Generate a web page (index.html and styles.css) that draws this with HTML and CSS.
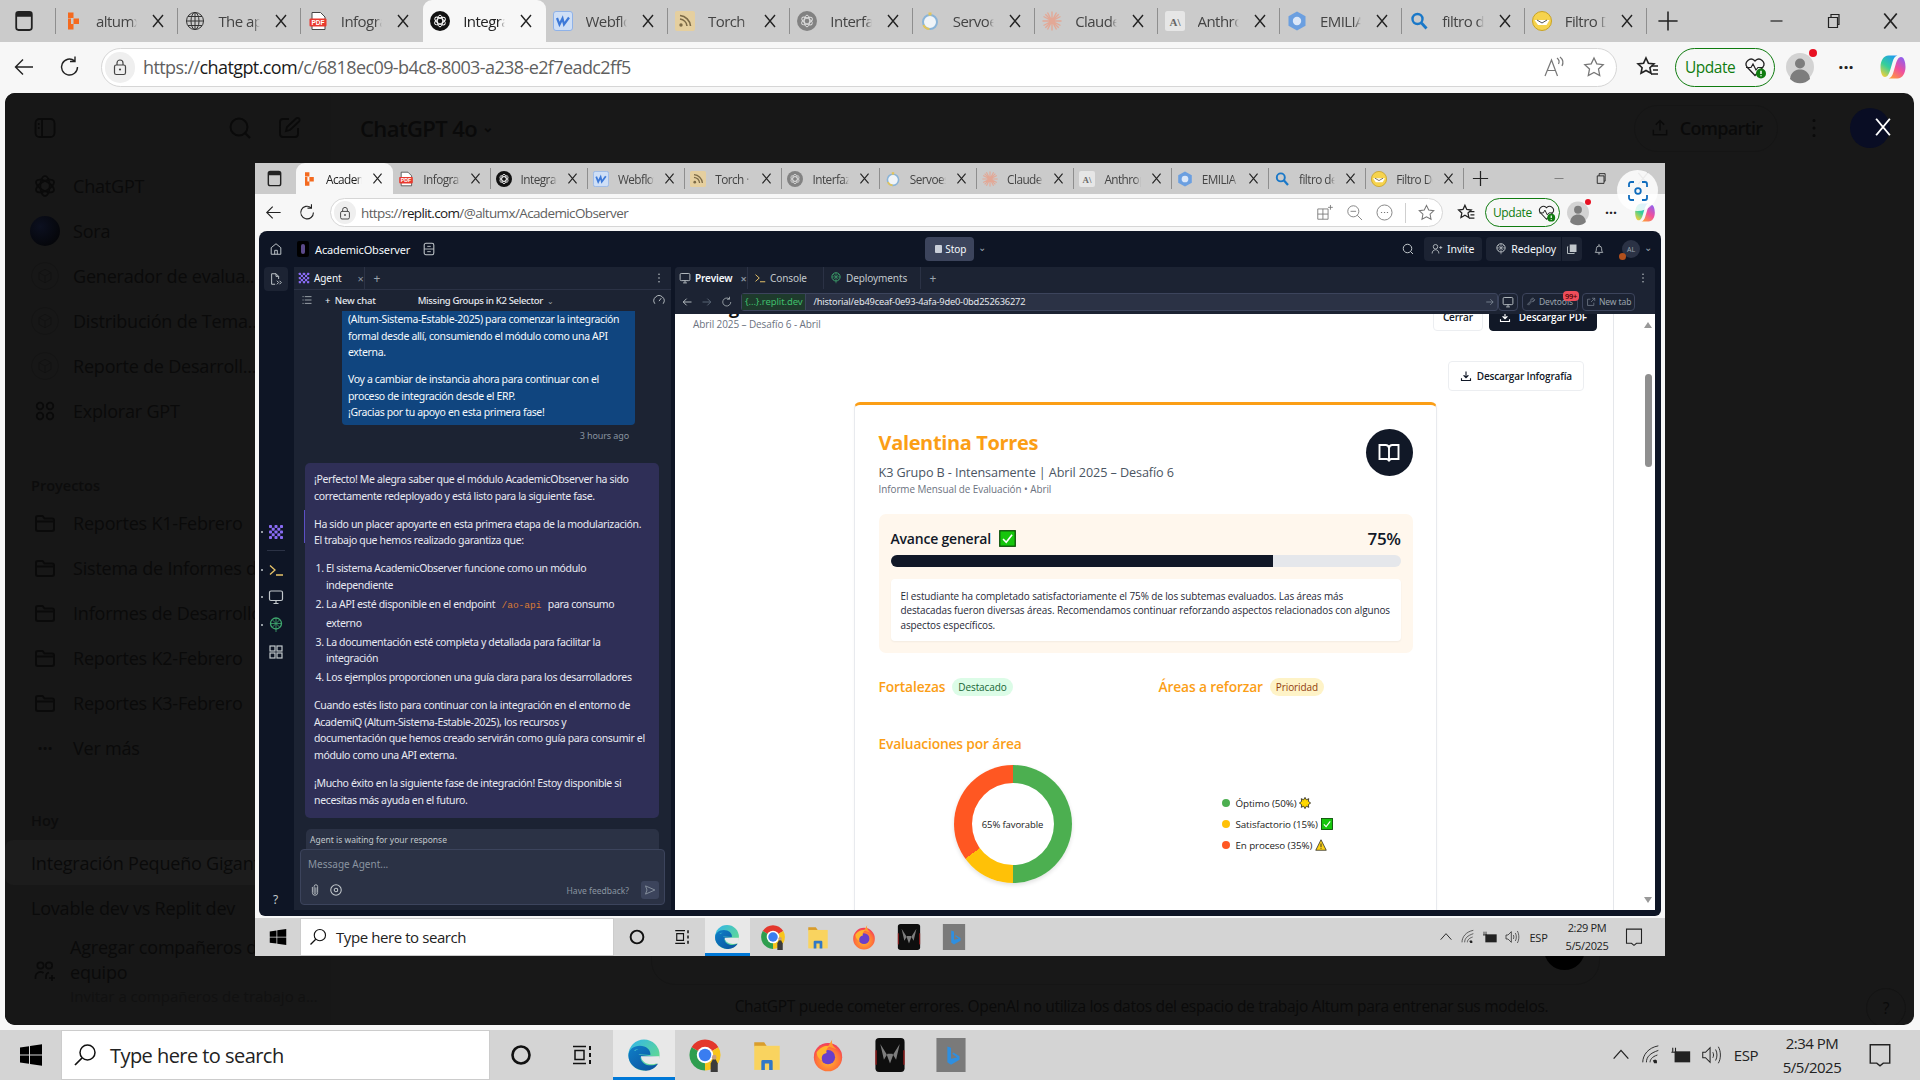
FILE: index.html
```html
<!DOCTYPE html>
<html lang="es">
<head>
<meta charset="utf-8">
<title>ChatGPT</title>
<link rel="stylesheet" href="styles.css">
</head>
<body>
<svg class="defs" aria-hidden="true">
  <defs>
    <linearGradient id="g-edge" x1="0" y1="0" x2="1" y2="1"><stop offset="0" stop-color="#2fb4ec"/><stop offset="1" stop-color="#6fe37a"/></linearGradient>
    <linearGradient id="g-edge2" x1="0" y1="0" x2="1" y2="1"><stop offset="0" stop-color="#0f7fc8"/><stop offset="1" stop-color="#0a4f9a"/></linearGradient>
    <radialGradient id="g-fox" cx=".5" cy=".6" r=".6"><stop offset="0" stop-color="#ffc02e"/><stop offset=".7" stop-color="#ff7139"/><stop offset="1" stop-color="#f0375e"/></radialGradient>
    <linearGradient id="g-cl" x1=".8" y1="0" x2=".2" y2="1"><stop offset="0" stop-color="#1f9bf0"/><stop offset=".55" stop-color="#35cf9a"/><stop offset="1" stop-color="#f2d03b"/></linearGradient>
    <linearGradient id="g-cr" x1=".8" y1="0" x2=".2" y2="1"><stop offset="0" stop-color="#8f5ff0"/><stop offset=".5" stop-color="#f0509c"/><stop offset="1" stop-color="#ff9a3c"/></linearGradient>
    <symbol id="i-x" viewBox="0 0 16 16"><path d="M3 2l10 12M13 2L3 14" fill="none" stroke="currentColor" stroke-width="1.4"/></symbol>
    <symbol id="i-side" viewBox="0 0 20 20"><rect x="3.500" y="2.500" width="13" height="15" rx="2" fill="none" stroke="currentColor" stroke-width="1.500"/><path d="M3.500 4.500a2 2 0 012-2h9a2 2 0 012 2v2h-13z" fill="currentColor"/></symbol>
    <symbol id="i-plus" viewBox="0 0 20 20"><path d="M10 2v16M2 10h16" stroke="currentColor" stroke-width="1.300" fill="none"/></symbol>
    <symbol id="i-min" viewBox="0 0 20 20"><path d="M4 10h12" stroke="currentColor" stroke-width="1.200"/></symbol>
    <symbol id="i-max" viewBox="0 0 20 20"><path d="M5 6.500h9v10H5zM7.500 6.500V3.500h8v10h-1.500" fill="none" stroke="currentColor" stroke-width="1.200"/></symbol>
    <symbol id="i-back" viewBox="0 0 24 24"><path d="M21 12H4M11 4.500L3.500 12l7.500 7.500" fill="none" stroke="currentColor" stroke-width="1.400"/></symbol>
    <symbol id="i-reload" viewBox="0 0 24 24"><path d="M19.500 12a8 8 0 11-3-6.200M17 1.500V6.500h-5" fill="none" stroke="currentColor" stroke-width="1.400"/></symbol>
    <symbol id="i-lock" viewBox="0 0 20 20"><rect x="4.500" y="8" width="11" height="9.500" rx="1.800" fill="none" stroke="currentColor" stroke-width="1.200"/><path d="M7 8V6a3 3 0 016 0v2" fill="none" stroke="currentColor" stroke-width="1.200"/><circle cx="10" cy="12.500" r="1.100" fill="currentColor"/></symbol>
    <symbol id="i-star" viewBox="0 0 24 24"><path d="M12 3l2.800 5.900 6.400.8-4.700 4.400 1.200 6.400L12 17.400l-5.700 3.100 1.200-6.400L2.800 9.700l6.400-.8z" fill="none" stroke="currentColor" stroke-width="1.300"/></symbol>
    <symbol id="i-favs" viewBox="0 0 24 24"><path d="M10 3l2.400 5.200 5.600.7-4.100 3.800 1.100 5.600-5-2.800-5 2.800 1.100-5.600L2 8.900l5.600-.7z" fill="none" stroke="currentColor" stroke-width="1.600"/><path d="M16 11h6M17 15h5M15 19h7" stroke="currentColor" stroke-width="1.500"/></symbol>
    <symbol id="i-aloud" viewBox="0 0 24 24"><path d="M3 21L9.500 5l6 16M5.500 15.500h8" fill="none" stroke="currentColor" stroke-width="1.200"/><path d="M15 3c2 1.500 2.500 4 1.500 6M18 2c3 2.500 3.500 6 2 9" fill="none" stroke="currentColor" stroke-width="1.200"/></symbol>
    <symbol id="i-heart" viewBox="0 0 24 24"><path d="M12 20.500L4 12a5 5 0 017.500-6.500l.5.500.5-.500A5 5 0 0120 12z" fill="none" stroke="#222" stroke-width="1.300"/><path d="M3 12.500h5l2-3.500 3 6 2-2.500h5" fill="none" stroke="#222" stroke-width="1.200"/><circle cx="18" cy="18.500" r="5" fill="#107c10"/><path d="M18 15.800v3.200M18 20.300v1" stroke="#fff" stroke-width="1.500"/></symbol>
    <symbol id="i-avatar" viewBox="0 0 28 28"><circle cx="14" cy="14" r="14" fill="#d3d3d3"/><circle cx="14" cy="10.500" r="5" fill="#7d7d7d"/><path d="M4 26c1-7 5-9.500 10-9.500s9 2.500 10 9.500a14 14 0 01-20 0z" fill="#7d7d7d"/></symbol>
    <symbol id="i-copilot" viewBox="0 0 28 28"><path d="M9.500 2.500h9c-2.500.5-3.800 3-4.800 6l-2.200 7.500C10.500 19.500 9 24 6 24c-3 0-4.500-5-4.500-10 0-6 3-11.500 8-11.500z" fill="url(#g-cl)"/><path d="M18.500 25.500h-9c2.500-.5 3.800-3 4.800-6l2.200-7.500C17.500 8.500 19 4 22 4c3 0 4.500 5 4.500 10 0 6-3 11.500-8 11.500z" fill="url(#g-cr)"/></symbol>
    <symbol id="i-gpt" viewBox="0 0 24 24"><g fill="none" stroke="currentColor" stroke-width="1.700"><ellipse cx="12" cy="12" rx="10" ry="4.700" transform="rotate(30 12 12)"/><ellipse cx="12" cy="12" rx="10" ry="4.700" transform="rotate(90 12 12)"/><ellipse cx="12" cy="12" rx="10" ry="4.700" transform="rotate(150 12 12)"/></g></symbol>
    <symbol id="a-tile" viewBox="0 0 24 24"><g fill="none" stroke="currentColor" stroke-width="1.100"><path d="M3.500 7.500h13v13h-13zM10 7.500v13M3.500 14h13"/><path d="M19.500 2.500v6M16.500 5.500h6"/></g></symbol>
    <symbol id="a-zoom" viewBox="0 0 24 24"><g fill="none" stroke="currentColor" stroke-width="1.100"><circle cx="10.500" cy="10.500" r="7"/><path d="M15.500 15.500l6 6M7 10.500h7"/></g></symbol>
    <symbol id="a-more" viewBox="0 0 24 24"><circle cx="12" cy="12" r="9.500" fill="none" stroke="currentColor" stroke-width="1.100"/><path d="M7.500 12h1.500M11.300 12h1.500M15 12h1.500" stroke="currentColor" stroke-width="1.500"/></symbol>
    <symbol id="f-altum" viewBox="0 0 20 20"><path d="M5 1.500h5.500V7H5zM10.500 7.500H16v5.500h-5.500zM5 13h5.500v5.500H5zM5 7.500h3V13H5z" fill="#f46a1f"/></symbol>
    <symbol id="f-globe" viewBox="0 0 20 20"><g fill="none" stroke="#333" stroke-width="1"><circle cx="10" cy="10" r="8.500"/><ellipse cx="10" cy="10" rx="4" ry="8.500"/><path d="M1.500 10h17M3 5.500h14M3 14.500h14M10 1.500v17"/></g></symbol>
    <symbol id="f-pdf" viewBox="0 0 20 20"><path d="M4 1.500h8.500L17 6v12.500H4z" fill="#fff" stroke="#444"/><rect x="1.500" y="7.500" width="17" height="8" rx="1" fill="#e8392e"/><text x="10" y="14" text-anchor="middle" font-size="6.500" font-weight="700" font-family="Liberation Sans, sans-serif" fill="#fff">PDF</text></symbol>
    <symbol id="f-gpt" viewBox="0 0 20 20"><circle cx="10" cy="10" r="10" fill="#111"/><use href="#i-gpt" x="3" y="3" width="14" height="14" color="#fff"/></symbol>
    <symbol id="f-gptg" viewBox="0 0 20 20"><circle cx="10" cy="10" r="10" fill="#828282"/><use href="#i-gpt" x="3" y="3" width="14" height="14" color="#ddd"/></symbol>
    <symbol id="f-web" viewBox="0 0 20 20"><rect x=".5" y=".5" width="19" height="19" rx="2.500" fill="#cfdff6" stroke="#8fb2e8"/><path d="M4 7l2.500 6.500L9.500 7.500 11 13.500 16 6.500" fill="none" stroke="#3d79d8" stroke-width="2.200"/></symbol>
    <symbol id="f-torch" viewBox="0 0 20 20"><rect width="20" height="20" rx="2" fill="#e5cf9f"/><g fill="none" stroke="#7c6a46" stroke-width="1.600"><path d="M5 8a8 8 0 017 7M5 4.500a11.500 11.500 0 0110.500 10.500"/></g><circle cx="6" cy="14" r="1.700" fill="#7c6a46"/></symbol>
    <symbol id="f-serv" viewBox="0 0 20 20"><circle cx="10" cy="11" r="7" fill="#f0f4f8" stroke="#8ab4d8" stroke-width="2"/><path d="M3.500 14a7 7 0 006 4" fill="none" stroke="#e3c55a" stroke-width="2"/><rect x="8.500" y="1.500" width="3" height="3" fill="#e3c55a"/></symbol>
    <symbol id="f-claude" viewBox="0 0 20 20"><g stroke="#e3a896" stroke-width="1.400" fill="none"><path d="M10 .5v19M.5 10h19M3.300 3.300l13.400 13.400M16.700 3.300L3.300 16.700M5.500 1.500l9 17M14.500 1.500l-9 17M1.500 5.500l17 9M18.500 5.500l-17 9"/></g></symbol>
    <symbol id="f-anth" viewBox="0 0 20 20"><rect width="20" height="20" rx="2.500" fill="#e6e6e6"/><text x="10" y="14.500" text-anchor="middle" font-size="11" font-weight="700" font-family="Liberation Serif, serif" fill="#666">A\</text></symbol>
    <symbol id="f-emi" viewBox="0 0 20 20"><path d="M10 .5l8.500 4.800v9.400L10 19.500l-8.500-4.800V5.300z" fill="#6b9fe0"/><circle cx="10" cy="10" r="4.200" fill="#dbe7f8"/></symbol>
    <symbol id="f-find" viewBox="0 0 20 20"><circle cx="8.500" cy="8" r="5" fill="none" stroke="#1a78c8" stroke-width="2.400"/><path d="M12.500 12l5 5.500" stroke="#1a78c8" stroke-width="2.800"/></symbol>
    <symbol id="f-hand" viewBox="0 0 20 20"><circle cx="10" cy="10" r="9.500" fill="#f6d34e" stroke="#c8a224"/><path d="M2.500 9h15l-3 5H6z" fill="#fff"/><path d="M5 9l5 3 5-3" fill="none" stroke="#555"/></symbol>
    <symbol id="t-win" viewBox="0 0 24 24"><path d="M1 4.500l9-1.300V11.500H1zM11 3.100L23 1.300V11.500H11zM1 12.500h9v8.300l-9-1.300zM11 12.500h12v10.200l-12-1.800z" fill="currentColor"/></symbol>
    <symbol id="t-lens" viewBox="0 0 24 24"><circle cx="14.500" cy="9.500" r="7.500" fill="none" stroke="currentColor" stroke-width="1.500"/><path d="M9 15l-7 7" stroke="currentColor" stroke-width="1.700"/></symbol>
    <symbol id="t-ring" viewBox="0 0 24 24"><circle cx="12" cy="12" r="8.500" fill="none" stroke="currentColor" stroke-width="2.600"/></symbol>
    <symbol id="t-view" viewBox="0 0 24 24"><path d="M3 3.500h13M3 20.500h13M5 7.500h9v9H5z" fill="none" stroke="currentColor" stroke-width="1.500"/><path d="M20 3v4M20 10v4M20 17v4" stroke="currentColor" stroke-width="2"/></symbol>
    <symbol id="t-edge" viewBox="0 0 24 24"><circle cx="12" cy="12" r="11" fill="url(#g-edge)"/><path d="M23 13.500H9.500c.5 5 6.500 7.500 12.500 4.500-2 3.500-6 5.500-10 5C6 22.500 1 18 1 12.500 1 8 5 5.500 9 5.500c4.500 0 8 3 7.500 6.500l-8-.5C6 14 6 17 8 19 3 16 3 9 8 8c-1 0-2 0-3 1 1-.5 2 3 5 3z" fill="url(#g-edge2)"/><path d="M23 12.800H9.800c.6 5 6.700 7.200 12.700 4.700.4-1.400.6-3 .5-4.700z" fill="var(--tile,#e6e6e6)"/></symbol>
    <symbol id="t-chrome" viewBox="0 0 24 24"><path d="M12 12L2.500 6.500A11 11 0 0121.500 6.500z" fill="#e3372c"/><path d="M12 12L21.500 6.500A11 11 0 0112 23z" fill="#f8c51c"/><path d="M12 12L12 23A11 11 0 012.500 6.500z" fill="#2f9e4f"/><circle cx="12" cy="12" r="5.800" fill="#fff"/><circle cx="12" cy="12" r="4.400" fill="#3a7df0"/><path d="M16 24v-6l1.500-3h2l1.500 3v6z" fill="#3b3b3b"/><circle cx="18.500" cy="13.500" r="1.600" fill="#caa07c"/></symbol>
    <symbol id="t-folder" viewBox="0 0 24 24"><path d="M3 3h7l2 3H3z" fill="#d99d2b"/><rect x="3" y="5.500" width="18" height="17" fill="#f9d35f"/><path d="M8 22.500v-6a1 1 0 011-1h6a1 1 0 011 1v6h-2.500v-4.500h-3v4.500z" fill="#3178c6"/></symbol>
    <symbol id="t-fox" viewBox="0 0 24 24"><circle cx="12" cy="13.500" r="10" fill="url(#g-fox)"/><path d="M15 1c-1 3 1 5 3 7L12 6z" fill="#ff9a2e"/><circle cx="12" cy="13.500" r="5" fill="#6a3fc9"/><path d="M4 10c3-4 7-5 9-4-2 1-2.500 3-2 4.500-3 .5-4 3-3 5.500-2-1-4-3-4-6z" fill="#ffb52e"/></symbol>
    <symbol id="t-pred" viewBox="0 0 24 28"><rect width="24" height="28" rx="3" fill="#0e0e0e"/><path d="M4 5l5 8 3 8 3-8 5-8-3 13-3-5h-4l-3 5z" fill="#7d7d7d"/><path d="M.5 10v12M23.500 10v12" stroke="#a81f1f"/></symbol>
    <symbol id="t-bing" viewBox="0 0 24 28"><rect width="24" height="28" fill="#7a7a7a"/><path d="M9 7l3 1v9l5-1-4-3 1-1 5 3v3l-7 4-3-2z" fill="#2f8fe0"/></symbol>
    <symbol id="t-up" viewBox="0 0 24 24"><path d="M4 16l8-9 8 9" fill="none" stroke="currentColor" stroke-width="1.400"/></symbol>
    <symbol id="t-wifi" viewBox="0 0 24 24"><g fill="none" stroke="currentColor" stroke-width="1"><path d="M3 20C3 12 9 4 20 2M7 20c0-6 4-10 13-13M11 20c0-3 2-6 8-8"/></g><path d="M14 18l1.500 3h3v-3l-2-1z" fill="currentColor"/></symbol>
    <symbol id="t-batt" viewBox="0 0 24 24"><rect x="5" y="8" width="17" height="12" fill="currentColor"/><path d="M3 4v5M6 4v5M1.500 9h6" stroke="currentColor" stroke-width="1.200"/></symbol>
    <symbol id="t-vol" viewBox="0 0 24 24"><path d="M3 9h3l5-5v16l-5-5H3z" fill="none" stroke="currentColor" stroke-width="1.100"/><path d="M14 9c1 2 1 4 0 6M17 6c2 3.500 2 8.500 0 12M20 3c3 5 3 13 0 18" fill="none" stroke="currentColor" stroke-width="1"/></symbol>
    <symbol id="t-note" viewBox="0 0 24 24"><path d="M3 2.500h18v17h-6l-3 2.500-3-2.500H3z" fill="none" stroke="currentColor" stroke-width="1.300"/></symbol>
    <symbol id="g-panel" viewBox="0 0 24 24"><rect x="2.500" y="3" width="19" height="18" rx="4" fill="none" stroke="currentColor" stroke-width="1.800"/><path d="M9 3v18" stroke="currentColor" stroke-width="1.800"/><circle cx="5.800" cy="8" r="1" fill="currentColor"/><circle cx="5.800" cy="12" r="1" fill="currentColor"/></symbol>
    <symbol id="g-search" viewBox="0 0 24 24"><circle cx="11" cy="11" r="8.500" fill="none" stroke="currentColor" stroke-width="2"/><path d="M17 17l5 5" stroke="currentColor" stroke-width="2"/></symbol>
    <symbol id="g-edit" viewBox="0 0 24 24"><path d="M12 3H6a3 3 0 00-3 3v12a3 3 0 003 3h12a3 3 0 003-3v-6M9 15l1-4L19 2.500a2 2 0 013 3L13 14z" fill="none" stroke="currentColor" stroke-width="1.800"/></symbol>
    <symbol id="g-cube" viewBox="0 0 24 24"><path d="M12 3l8 4.500v9L12 21l-8-4.500v-9zM4 7.500l8 4.500 8-4.500M12 12v9" fill="none" stroke="currentColor" stroke-width="1.300"/></symbol>
    <symbol id="g-apps" viewBox="0 0 24 24"><g fill="none" stroke="currentColor" stroke-width="1.800"><circle cx="7" cy="7" r="3.300"/><circle cx="17" cy="7" r="3.300"/><circle cx="7" cy="17" r="3.300"/><circle cx="17" cy="17" r="3.300"/></g></symbol>
    <symbol id="g-folder" viewBox="0 0 24 24"><path d="M3 8V7a2 2 0 012-2h4.500l2 2.500H19a2 2 0 012 2V18a2 2 0 01-2 2H5a2 2 0 01-2-2zM3 10.500h18" fill="none" stroke="currentColor" stroke-width="2"/></symbol>
    <symbol id="g-team" viewBox="0 0 24 24"><g fill="none" stroke="currentColor" stroke-width="1.700"><circle cx="7.500" cy="6.500" r="3.200"/><circle cx="16" cy="6.500" r="3.200"/><path d="M2.500 20v-3a5 5 0 018-3M13 20v-3a4 4 0 013-3.500"/><path d="M19 16v6M16 19h6"/></g></symbol>
    <symbol id="g-share" viewBox="0 0 24 24"><path d="M12 15V3M7 8l5-5 5 5M4 14v6h16v-6" fill="none" stroke="currentColor" stroke-width="1.800"/></symbol>
    <symbol id="r-home" viewBox="0 0 16 16"><path d="M2.500 14V6.500L8 2l5.500 4.500V14zM6.500 14V9.500h3V14" fill="none" stroke="currentColor" stroke-width="1.100"/></symbol>
    <symbol id="r-db" viewBox="0 0 16 16"><rect x="2.500" y="1.500" width="11" height="13" rx="2" fill="none" stroke="currentColor" stroke-width="1.200"/><path d="M2.500 8h11M6 5h4M6 11h4" stroke="currentColor" stroke-width="1"/></symbol>
    <symbol id="r-agent" viewBox="0 0 16 16"><g fill="currentColor"><rect x="1" y="1" width="3" height="3" rx=".8"/><rect x="6.500" y="1" width="3" height="3" rx=".8"/><rect x="12" y="1" width="3" height="3" rx=".8"/><rect x="3.700" y="3.700" width="3" height="3" rx=".8"/><rect x="9.300" y="3.700" width="3" height="3" rx=".8"/><rect x="1" y="6.500" width="3" height="3" rx=".8"/><rect x="6.500" y="6.500" width="3" height="3" rx=".8"/><rect x="12" y="6.500" width="3" height="3" rx=".8"/><rect x="3.700" y="9.300" width="3" height="3" rx=".8"/><rect x="9.300" y="9.300" width="3" height="3" rx=".8"/><rect x="1" y="12" width="3" height="3" rx=".8"/><rect x="6.500" y="12" width="3" height="3" rx=".8"/><rect x="12" y="12" width="3" height="3" rx=".8"/></g></symbol>
    <symbol id="r-term" viewBox="0 0 16 16"><path d="M2 3.500L7 8l-5 4.500M8 13h7" fill="none" stroke="currentColor" stroke-width="1.300"/></symbol>
    <symbol id="r-mon" viewBox="0 0 16 16"><rect x="1.500" y="2" width="13" height="9.500" rx="1.500" fill="none" stroke="currentColor" stroke-width="1.200"/><path d="M8 11.500V14M5.500 14.500h5" stroke="currentColor" stroke-width="1.200"/></symbol>
    <symbol id="r-tree" viewBox="0 0 16 16"><circle cx="8" cy="6.500" r="5.500" fill="none" stroke="currentColor" stroke-width="1.300"/><path d="M8 1v14M2.500 6.500h11M4.500 3l7 7M11.500 3l-7 7" stroke="currentColor" stroke-width=".8"/></symbol>
    <symbol id="r-grid" viewBox="0 0 16 16"><g fill="none" stroke="currentColor" stroke-width="1.200"><rect x="2" y="2" width="5" height="5"/><rect x="9" y="2" width="5" height="5"/><rect x="2" y="9" width="5" height="5"/><rect x="9" y="9" width="5" height="5"/></g></symbol>
    <symbol id="r-files" viewBox="0 0 16 16"><path d="M7 14H3V2h5l3 3v3M8 2v3h3M9 10l2 2-2 2M12 10l2 2-2 2" fill="none" stroke="currentColor" stroke-width="1.100"/></symbol>
    <symbol id="r-list" viewBox="0 0 16 16"><path d="M5 3.500h9M5 8h9M5 12.500h9M2 3.500h1.500M2 8h1.500M2 12.500h1.500" stroke="currentColor" stroke-width="1"/></symbol>
    <symbol id="r-gauge" viewBox="0 0 16 16"><path d="M2.500 13a6.800 6.800 0 1111 0M8 9.500l3-4" fill="none" stroke="currentColor" stroke-width="1.200"/></symbol>
    <symbol id="r-dots" viewBox="0 0 16 16"><circle cx="8" cy="3" r="1" fill="currentColor"/><circle cx="8" cy="8" r="1" fill="currentColor"/><circle cx="8" cy="13" r="1" fill="currentColor"/></symbol>
    <symbol id="r-arrowl" viewBox="0 0 16 16"><path d="M14 8H3M7.500 3.500L3 8l4.500 4.500" fill="none" stroke="currentColor" stroke-width="1.200"/></symbol>
    <symbol id="r-arrowr" viewBox="0 0 16 16"><path d="M2 8h11M8.500 3.500L13 8l-4.500 4.500" fill="none" stroke="currentColor" stroke-width="1.200"/></symbol>
    <symbol id="r-invite" viewBox="0 0 16 16"><circle cx="6" cy="5" r="3" fill="none" stroke="currentColor" stroke-width="1.100"/><path d="M1.500 14c0-3 2-5 4.500-5s4.500 2 4.500 5M13 4v4M11 6h4" fill="none" stroke="currentColor" stroke-width="1.100"/></symbol>
    <symbol id="r-copy" viewBox="0 0 16 16"><path d="M5 2h9v10H5z" fill="currentColor"/><path d="M3 5H2v9h9v-1" fill="none" stroke="currentColor" stroke-width="1.200"/></symbol>
    <symbol id="r-bell" viewBox="0 0 16 16"><path d="M3 12.500c1-1 1.500-2 1.500-5A3.500 3.500 0 018 4a3.500 3.500 0 013.500 3.500c0 3 .5 4 1.500 5zM8 1.500V4M6.500 14.500h3" fill="none" stroke="currentColor" stroke-width="1.100"/></symbol>
    <symbol id="r-tool" viewBox="0 0 16 16"><path d="M14 4a3.500 3.500 0 01-4.800 3.200L4 13l-1.500-1.500 5.300-5.300A3.500 3.500 0 0112 2l-2 2 1.500 1.500z" fill="none" stroke="currentColor" stroke-width="1"/></symbol>
    <symbol id="r-ext" viewBox="0 0 16 16"><path d="M12.500 9v4.500h-10v-10H7M9.500 2h4.500v4.500M14 2L8 8" fill="none" stroke="currentColor" stroke-width="1"/></symbol>
    <symbol id="r-clip" viewBox="0 0 16 16"><path d="M5 4.500v6.500a3 3 0 006 0V4a2 2 0 00-4 0v7a1 1 0 002 0V5" fill="none" stroke="currentColor" stroke-width="1"/></symbol>
    <symbol id="r-target" viewBox="0 0 16 16"><circle cx="8" cy="8" r="6" fill="none" stroke="currentColor" stroke-width="1.200"/><circle cx="8" cy="8" r="2" fill="none" stroke="currentColor" stroke-width="1.200"/></symbol>
    <symbol id="r-send" viewBox="0 0 16 16"><path d="M2 2.500L14.500 8 2 13.500l2-5.500z" fill="none" stroke="currentColor" stroke-width="1.200"/></symbol>
    <symbol id="c-dl" viewBox="0 0 16 16"><path d="M8 2v8M4.800 7L8 10.200 11.200 7M2 11v3h12v-3" fill="none" stroke="currentColor" stroke-width="1.500"/></symbol>
    <symbol id="c-book" viewBox="0 0 24 24"><path d="M12 6v14M2.500 4h6a3.500 3.500 0 013.500 3 3.500 3.500 0 013.500-3h6v14h-7a2.500 2.500 0 00-2.500 2.500A2.500 2.500 0 009.500 18h-7z" fill="none" stroke="currentColor" stroke-width="1.900"/></symbol>
    <symbol id="e-check" viewBox="0 0 16 16"><rect x=".7" y=".7" width="14.600" height="14.600" fill="#16c60c" stroke="#0a4f06" stroke-width="1.200"/><path d="M3.800 8.500l3 3 5.500-7" fill="none" stroke="#fff" stroke-width="1.500"/></symbol>
    <symbol id="e-warn" viewBox="0 0 16 16"><path d="M8 1L15 15H1z" fill="#fcd116" stroke="#222" stroke-width="1"/><path d="M8 6v5M8 12.300v1" stroke="#222" stroke-width="1.200"/></symbol>
    <symbol id="e-burst" viewBox="0 0 16 16"><path d="M8 .5l1.800 3.300L13 2.200l-.6 3.500L15.500 8l-3.100 2.300.6 3.500-3.200-1.600L8 15.500l-1.800-3.300L3 13.800l.6-3.500L.5 8l3.100-2.300L3 2.200l3.200 1.600z" fill="#ffd800" stroke="#222" stroke-width="1.100"/></symbol>
    <symbol id="x-cap" viewBox="0 0 24 24"><path d="M3 8V5a2 2 0 012-2h3M16 3h3a2 2 0 012 2v3M21 16v3a2 2 0 01-2 2h-3M8 21H5a2 2 0 01-2-2v-3" fill="none" stroke="#0f6cbd" stroke-width="1.800"/><circle cx="12" cy="12" r="2.800" fill="none" stroke="#0f6cbd" stroke-width="1.800"/></symbol>
  </defs>
</svg>

<div class="win">
  <div class="tabbar">
    <div class="tb-first"><svg class="chrome-ico"><use href="#i-side"/></svg></div>
    <div class="tab"><svg class="fav"><use href="#f-altum"/></svg><span class="tt">altumx</span><svg class="tx"><use href="#i-x"/></svg></div>
    <div class="tab"><svg class="fav"><use href="#f-globe"/></svg><span class="tt">The app</span><svg class="tx"><use href="#i-x"/></svg></div>
    <div class="tab noline"><svg class="fav"><use href="#f-pdf"/></svg><span class="tt">Infografía</span><svg class="tx"><use href="#i-x"/></svg></div>
    <div class="tab active"><svg class="fav"><use href="#f-gpt"/></svg><span class="tt">Integración</span><svg class="tx"><use href="#i-x"/></svg></div>
    <div class="tab"><svg class="fav"><use href="#f-web"/></svg><span class="tt">Webflow</span><svg class="tx"><use href="#i-x"/></svg></div>
    <div class="tab"><svg class="fav"><use href="#f-torch"/></svg><span class="tt">Torch - W</span><svg class="tx"><use href="#i-x"/></svg></div>
    <div class="tab"><svg class="fav"><use href="#f-gptg"/></svg><span class="tt">Interfaz de</span><svg class="tx"><use href="#i-x"/></svg></div>
    <div class="tab"><svg class="fav"><use href="#f-serv"/></svg><span class="tt">Servoescuela</span><svg class="tx"><use href="#i-x"/></svg></div>
    <div class="tab"><svg class="fav"><use href="#f-claude"/></svg><span class="tt">Claude</span><svg class="tx"><use href="#i-x"/></svg></div>
    <div class="tab"><svg class="fav"><use href="#f-anth"/></svg><span class="tt">Anthropic</span><svg class="tx"><use href="#i-x"/></svg></div>
    <div class="tab"><svg class="fav"><use href="#f-emi"/></svg><span class="tt">EMILIA Sis</span><svg class="tx"><use href="#i-x"/></svg></div>
    <div class="tab"><svg class="fav"><use href="#f-find"/></svg><span class="tt">filtro de</span><svg class="tx"><use href="#i-x"/></svg></div>
    <div class="tab"><svg class="fav"><use href="#f-hand"/></svg><span class="tt">Filtro De</span><svg class="tx"><use href="#i-x"/></svg></div>
    <div class="tb-plus"><svg class="chrome-ico"><use href="#i-plus"/></svg></div>
    <div class="wctl"><svg class="wc"><use href="#i-min"/></svg><svg class="wc"><use href="#i-max"/></svg><svg class="wc"><use href="#i-x"/></svg></div>
  </div>
  <div class="addr">
    <div class="nav-btn"><svg class="chrome-ico"><use href="#i-back"/></svg></div>
    <div class="nav-btn"><svg class="chrome-ico"><use href="#i-reload"/></svg></div>
    <div class="pill">
      <span class="locktile"><svg class="lockico"><use href="#i-lock"/></svg></span>
      <span class="url"><span class="url-dim">https://</span>chatgpt.com<span class="url-dim">/c/6818ec09-b4c8-8003-a238-e2f7eadc2ff5</span></span>
      <span class="pill-end">
        <svg class="chrome-ico dim"><use href="#i-aloud"/></svg>
        <svg class="chrome-ico dim"><use href="#i-star"/></svg>
      </span>
    </div>
    <svg class="chrome-ico favs"><use href="#i-favs"/></svg>
    <span class="update"><span>Update</span><svg class="chrome-ico"><use href="#i-heart"/></svg></span>
    <span class="avatar"><svg class="av"><use href="#i-avatar"/></svg><i class="red-dot"></i></span>
    <span class="more">···</span>
    <svg class="copilot"><use href="#i-copilot"/></svg>
  </div>

  <div class="stage">
    <div class="gpt">
      <aside class="gpt-side">
        <div class="gpt-tools"><svg class="g24"><use href="#g-panel"/></svg><span class="tools-right"><svg class="g24"><use href="#g-search"/></svg><svg class="g24"><use href="#g-edit"/></svg></span></div>
        <div class="grow"><svg class="g22"><use href="#i-gpt"/></svg><span>ChatGPT</span></div>
        <div class="grow"><i class="sora"></i><span>Sora</span></div>
        <div class="grow"><span class="ringed"><svg class="g18"><use href="#g-cube"/></svg></span><span>Generador de evalua...</span></div>
        <div class="grow"><span class="ringed"><svg class="g18"><use href="#g-cube"/></svg></span><span>Distribución de Tema...</span></div>
        <div class="grow"><span class="ringed"><svg class="g18"><use href="#g-cube"/></svg></span><span>Reporte de Desarroll...</span></div>
        <div class="grow"><svg class="g22"><use href="#g-apps"/></svg><span>Explorar GPT</span></div>
        <div class="ghead">Proyectos</div>
        <div class="grow"><svg class="g22"><use href="#g-folder"/></svg><span>Reportes K1-Febrero</span></div>
        <div class="grow"><svg class="g22"><use href="#g-folder"/></svg><span>Sistema de Informes de Desarrollo</span></div>
        <div class="grow"><svg class="g22"><use href="#g-folder"/></svg><span>Informes de Desarrollo</span></div>
        <div class="grow"><svg class="g22"><use href="#g-folder"/></svg><span>Reportes K2-Febrero</span></div>
        <div class="grow"><svg class="g22"><use href="#g-folder"/></svg><span>Reportes K3-Febrero</span></div>
        <div class="grow"><span class="more-dim">···</span><span>Ver más</span></div>
        <div class="ghead today">Hoy</div>
        <div class="hist sel">Integración Pequeño Gigante</div>
        <div class="hist">Lovable dev vs Replit dev</div>
        <div class="team"><svg class="g24"><use href="#g-team"/></svg><div><div class="team-t">Agregar compañeros de equipo</div><div class="team-s">Invitar a compañeros de trabajo a...</div></div></div>
      </aside>
      <main class="gpt-main">
        <header class="gpt-head">
          <span class="model">ChatGPT 4o <small>⌄</small></span>
          <span class="head-right">
            <span class="share"><svg class="g20"><use href="#g-share"/></svg>Compartir</span>
            <svg class="g24"><use href="#r-dots"/></svg>
            <span class="gavatar"></span>
          </span>
        </header>
        <div class="composer"><i class="sendc"></i></div>
        <div class="disclaimer">ChatGPT puede cometer errores. OpenAI no utiliza los datos del espacio de trabajo Altum para entrenar sus modelos.<span class="help">?</span></div>
      </main>
    </div>

    <svg class="close-x"><use href="#i-x"/></svg>

    <div class="shot">
      <div class="tabbar sm">
        <div class="tb-first"><svg class="chrome-ico"><use href="#i-side"/></svg></div>
        <div class="tab active"><svg class="fav"><use href="#f-altum"/></svg><span class="tt">AcademicObserver</span><svg class="tx"><use href="#i-x"/></svg></div>
        <div class="tab"><svg class="fav"><use href="#f-pdf"/></svg><span class="tt">Infografía</span><svg class="tx"><use href="#i-x"/></svg></div>
        <div class="tab"><svg class="fav"><use href="#f-gpt"/></svg><span class="tt">Integración</span><svg class="tx"><use href="#i-x"/></svg></div>
        <div class="tab"><svg class="fav"><use href="#f-web"/></svg><span class="tt">Webflow</span><svg class="tx"><use href="#i-x"/></svg></div>
        <div class="tab"><svg class="fav"><use href="#f-torch"/></svg><span class="tt">Torch · W</span><svg class="tx"><use href="#i-x"/></svg></div>
        <div class="tab"><svg class="fav"><use href="#f-gptg"/></svg><span class="tt">Interfaz de</span><svg class="tx"><use href="#i-x"/></svg></div>
        <div class="tab"><svg class="fav"><use href="#f-serv"/></svg><span class="tt">Servoescuela</span><svg class="tx"><use href="#i-x"/></svg></div>
        <div class="tab"><svg class="fav"><use href="#f-claude"/></svg><span class="tt">Claude</span><svg class="tx"><use href="#i-x"/></svg></div>
        <div class="tab"><svg class="fav"><use href="#f-anth"/></svg><span class="tt">Anthropic</span><svg class="tx"><use href="#i-x"/></svg></div>
        <div class="tab"><svg class="fav"><use href="#f-emi"/></svg><span class="tt">EMILIA Sistema</span><svg class="tx"><use href="#i-x"/></svg></div>
        <div class="tab"><svg class="fav"><use href="#f-find"/></svg><span class="tt">filtro de</span><svg class="tx"><use href="#i-x"/></svg></div>
        <div class="tab"><svg class="fav"><use href="#f-hand"/></svg><span class="tt">Filtro De</span><svg class="tx"><use href="#i-x"/></svg></div>
        <div class="tb-plus"><svg class="chrome-ico"><use href="#i-plus"/></svg></div>
        <div class="wctl"><svg class="wc dimmed"><use href="#i-min"/></svg><svg class="wc"><use href="#i-max"/></svg><svg class="wc dimmed"><use href="#i-x"/></svg></div>
      </div>
      <div class="addr sm">
        <div class="nav-btn"><svg class="chrome-ico"><use href="#i-back"/></svg></div>
        <div class="nav-btn"><svg class="chrome-ico"><use href="#i-reload"/></svg></div>
        <div class="pill">
          <span class="locktile"><svg class="lockico"><use href="#i-lock"/></svg></span>
          <span class="url"><span class="url-dim">https://</span>replit.com<span class="url-dim">/@altumx/AcademicObserver</span></span>
          <span class="pill-end">
            <svg class="chrome-ico dim"><use href="#a-tile"/></svg>
            <svg class="chrome-ico dim"><use href="#a-zoom"/></svg>
            <svg class="chrome-ico dim"><use href="#a-more"/></svg>
            <i class="pill-sep"></i>
            <svg class="chrome-ico dim"><use href="#i-star"/></svg>
          </span>
        </div>
        <svg class="chrome-ico favs"><use href="#i-favs"/></svg>
        <span class="update"><span>Update</span><svg class="chrome-ico"><use href="#i-heart"/></svg></span>
        <span class="avatar"><svg class="av"><use href="#i-avatar"/></svg><i class="red-dot"></i></span>
        <span class="more">···</span>
        <svg class="copilot"><use href="#i-copilot"/></svg>
      </div>

      <div class="rp">
        <header class="rp-head">
          <svg class="r14"><use href="#r-home"/></svg>
          <span class="rp-proj"></span>
          <span class="rp-name">AcademicObserver</span>
          <svg class="r14"><use href="#r-db"/></svg>
          <span class="rp-run"><span class="rp-stop"><i></i>Stop</span><span class="rp-chev">⌄</span></span>
          <span class="rp-right">
            <svg class="r14"><use href="#g-search"/></svg>
            <span class="rp-btn"><svg class="r12"><use href="#r-invite"/></svg>Invite</span>
            <span class="rp-btn redeploy"><svg class="r12"><use href="#r-tree"/></svg>Redeploy</span>
            <span class="rp-btn copy"><svg class="r12"><use href="#r-copy"/></svg></span>
            <svg class="r14 bell"><use href="#r-bell"/></svg>
            <span class="rp-av">AL<i></i></span>
            <span class="rp-chev last">⌄</span>
          </span>
        </header>
        <div class="rp-body">
          <nav class="rail">
            <span class="rail-top"><svg class="r14"><use href="#r-files"/></svg></span>
            <span class="rail-item"><svg class="r16 violet"><use href="#r-agent"/></svg></span>
            <i class="rail-sep"></i>
            <span class="rail-item"><svg class="r16 yellow"><use href="#r-term"/></svg></span>
            <span class="rail-item"><svg class="r16"><use href="#r-mon"/></svg></span>
            <span class="rail-item"><svg class="r16 green"><use href="#r-tree"/></svg></span>
            <svg class="r16"><use href="#r-grid"/></svg>
            <span class="rail-help">?</span>
          </nav>
          <section class="agent">
            <div class="ptabs">
              <span class="ptab cur a-tab"><svg class="r12 violet"><use href="#r-agent"/></svg>Agent<span class="ptab-x">×</span></span>
              <span class="ptab-add">+</span>
              <svg class="r12 ptab-dots"><use href="#r-dots"/></svg>
            </div>
            <div class="a-bar">
              <svg class="r12"><use href="#r-list"/></svg>
              <span class="a-new">+&nbsp; New chat</span>
              <span class="a-title">Missing Groups in K2 Selector <small>⌄</small></span>
              <svg class="r12 a-gauge"><use href="#r-gauge"/></svg>
            </div>
            <div class="chat">
              <div class="bubble-user">
                <p>Ahora pasaré a la instancia del ERP de AcademiQ<br>(Altum-Sistema-Estable-2025) para comenzar la integración<br>formal desde allí, consumiendo el módulo como una API<br>externa.</p>
                <p>Voy a cambiar de instancia ahora para continuar con el<br>proceso de integración desde el ERP.<br>¡Gracias por tu apoyo en esta primera fase!</p>
              </div>
              <div class="stamp">3 hours ago</div>
              <div class="bubble-ai">
                <p>¡Perfecto! Me alegra saber que el módulo AcademicObserver ha sido<br>correctamente redeployado y está listo para la siguiente fase.</p>
                <p>Ha sido un placer apoyarte en esta primera etapa de la modularización.<br>El trabajo que hemos realizado garantiza que:</p>
                <ol>
                  <li>El sistema AcademicObserver funcione como un módulo<br>independiente</li>
                  <li>La API esté disponible en el endpoint <code>/ao-api</code> para consumo<br>externo</li>
                  <li>La documentación esté completa y detallada para facilitar la<br>integración</li>
                  <li>Los ejemplos proporcionen una guía clara para los desarrolladores</li>
                </ol>
                <p>Cuando estés listo para continuar con la integración en el entorno de<br>AcademiQ (Altum-Sistema-Estable-2025), los recursos y<br>documentación que hemos creado servirán como guía para consumir el<br>módulo como una API externa.</p>
                <p>¡Mucho éxito en la siguiente fase de integración! Estoy disponible si<br>necesitas más ayuda en el futuro.</p>
              </div>
            </div>
            <div class="a-status">Agent is waiting for your response</div>
            <div class="a-input">
              <div class="a-ph">Message Agent...</div>
              <div class="a-tools">
                <svg class="r14"><use href="#r-clip"/></svg>
                <svg class="r14"><use href="#r-target"/></svg>
                <span class="a-fb">Have feedback?</span>
                <span class="a-send"><svg class="r12"><use href="#r-send"/></svg></span>
              </div>
            </div>
          </section>
          <section class="preview">
            <div class="ptabs">
              <span class="ptab cur pv-tab"><svg class="r12"><use href="#r-mon"/></svg>Preview<span class="ptab-x">×</span></span>
              <span class="ptab con-tab"><svg class="r12 yellow"><use href="#r-term"/></svg>Console</span>
              <span class="ptab dep-tab"><svg class="r12 green"><use href="#r-tree"/></svg>Deployments</span>
              <span class="ptab-add">+</span>
              <svg class="r12 ptab-dots"><use href="#r-dots"/></svg>
            </div>
            <div class="pv-url">
              <svg class="r12"><use href="#r-arrowl"/></svg>
              <svg class="r12 faint"><use href="#r-arrowr"/></svg>
              <svg class="r12"><use href="#i-reload"/></svg>
              <span class="pv-box"><span class="pv-host">{...}.replit.dev</span><span class="pv-path">/historial/eb49ceaf-0e93-4afa-9de0-0bd252636272</span><svg class="r10 pv-go"><use href="#r-arrowr"/></svg></span>
              <span class="pv-mini"><svg class="r12"><use href="#r-mon"/></svg></span>
              <span class="pv-mini devt"><svg class="r10"><use href="#r-tool"/></svg>Devtools<b class="badge">99+</b></span>
              <span class="pv-mini"><svg class="r10"><use href="#r-ext"/></svg>New tab</span>
            </div>
            <div class="pv-frame">
              <div class="page">
                <div class="page-head">
                  <div>
                    <div class="page-h">Infografía del Alumno</div>
                    <div class="page-sub">Abril 2025 – Desafío 6 - Abril</div>
                  </div>
                  <div class="page-btns">
                    <span class="btn">Cerrar</span>
                    <span class="btn dark"><svg class="r12"><use href="#c-dl"/></svg>Descargar PDF</span>
                  </div>
                </div>
                <div class="btn-row"><span class="btn tall"><svg class="r12"><use href="#c-dl"/></svg>Descargar Infografía</span></div>
                <article class="card">
                  <div class="card-head">
                    <div>
                      <h1 class="name">Valentina Torres</h1>
                      <div class="meta">K3 Grupo B - Intensamente | Abril 2025 – Desafío 6</div>
                      <div class="meta2">Informe Mensual de Evaluación • Abril</div>
                    </div>
                    <span class="bookc"><svg class="book"><use href="#c-book"/></svg></span>
                  </div>
                  <div class="prog">
                    <div class="prog-top"><span class="prog-l">Avance general <svg class="emo15"><use href="#e-check"/></svg></span><span class="prog-p">75%</span></div>
                    <div class="bar"><div class="bar-fill" style="width:75%"></div></div>
                    <div class="note">El estudiante ha completado satisfactoriamente el 75% de los subtemas evaluados. Las áreas más destacadas fueron diversas áreas. Recomendamos continuar reforzando aspectos relacionados con algunos aspectos específicos.</div>
                  </div>
                  <div class="two">
                    <div class="sect"><span class="sect-t">Fortalezas</span><span class="chip ok">Destacado</span></div>
                    <div class="sect"><span class="sect-t">Áreas a reforzar</span><span class="chip pr">Prioridad</span></div>
                  </div>
                  <h2 class="sect-t eval">Evaluaciones por área</h2>
                  <div class="chart">
                    <div class="chart-l"><div class="donut"><div class="hole">65% favorable</div></div></div>
                    <ul class="legend">
                      <li><i class="dot g"></i>Óptimo (50%) <svg class="emo11"><use href="#e-burst"/></svg></li>
                      <li><i class="dot y"></i>Satisfactorio (15%) <svg class="emo11"><use href="#e-check"/></svg></li>
                      <li><i class="dot o"></i>En proceso (35%) <svg class="emo11"><use href="#e-warn"/></svg></li>
                    </ul>
                  </div>
                </article>
              </div>
              <div class="sbar"><i class="sb-up"></i><i class="sb-th"></i><i class="sb-dn"></i></div>
            </div>
          </section>
        </div>
      </div>

      <div class="taskbar sm">
        <span class="tk-start"><svg class="tk-win"><use href="#t-win"/></svg></span>
        <span class="tk-search"><svg class="tk-lens"><use href="#t-lens"/></svg>Type here to search</span>
        <span class="tk-cell"><svg class="tk-i"><use href="#t-ring"/></svg></span>
        <span class="tk-cell"><svg class="tk-i"><use href="#t-view"/></svg></span>
        <span class="tk-cell on"><svg class="tk-a"><use href="#t-edge"/></svg></span>
        <span class="tk-cell"><svg class="tk-a"><use href="#t-chrome"/></svg></span>
        <span class="tk-cell"><svg class="tk-a"><use href="#t-folder"/></svg></span>
        <span class="tk-cell"><svg class="tk-a"><use href="#t-fox"/></svg></span>
        <span class="tk-cell"><svg class="tk-a"><use href="#t-pred"/></svg></span>
        <span class="tk-cell"><svg class="tk-a"><use href="#t-bing"/></svg></span>
        <span class="tray">
          <svg class="tr"><use href="#t-up"/></svg><svg class="tr"><use href="#t-wifi"/></svg><svg class="tr"><use href="#t-batt"/></svg><svg class="tr"><use href="#t-vol"/></svg>
          <span class="lang">ESP</span>
          <span class="clock">2:29 PM<br>5/5/2025</span>
          <svg class="tr note-i"><use href="#t-note"/></svg>
        </span>
      </div>
      <span class="capture"><svg class="cap-i"><use href="#x-cap"/></svg></span>
    </div>
  </div>

  <div class="taskbar">
    <span class="tk-start"><svg class="tk-win"><use href="#t-win"/></svg></span>
    <span class="tk-search"><svg class="tk-lens"><use href="#t-lens"/></svg>Type here to search</span>
    <span class="tk-cell"><svg class="tk-i"><use href="#t-ring"/></svg></span>
    <span class="tk-cell"><svg class="tk-i"><use href="#t-view"/></svg></span>
    <span class="tk-cell on"><svg class="tk-a"><use href="#t-edge"/></svg></span>
    <span class="tk-cell"><svg class="tk-a"><use href="#t-chrome"/></svg></span>
    <span class="tk-cell"><svg class="tk-a"><use href="#t-folder"/></svg></span>
    <span class="tk-cell"><svg class="tk-a"><use href="#t-fox"/></svg></span>
    <span class="tk-cell"><svg class="tk-a"><use href="#t-pred"/></svg></span>
    <span class="tk-cell"><svg class="tk-a"><use href="#t-bing"/></svg></span>
    <span class="tray">
      <svg class="tr"><use href="#t-up"/></svg><svg class="tr"><use href="#t-wifi"/></svg><svg class="tr"><use href="#t-batt"/></svg><svg class="tr"><use href="#t-vol"/></svg>
      <span class="lang">ESP</span>
      <span class="clock">2:34 PM<br>5/5/2025</span>
      <svg class="tr note-i"><use href="#t-note"/></svg>
    </span>
  </div>
</div>
</body>
</html>
```
FILE: styles.css
```css
* { box-sizing: border-box; }
html, body { margin: 0; height: 100%; overflow: hidden; }
body { font-family: "Open Sans", "Noto Sans", sans-serif; color: #222; background: #f7f7f7; }
svg { display: block; flex: none; }
.defs { position: absolute; width: 0; height: 0; }
p, ol, ul, h1, h2 { margin: 0; padding: 0; }

.win { width: 1920px; height: 1080px; display: flex; flex-direction: column; }

/* browser tab strip */
.tabbar { --tabw: 122.4px; --tabh: 42px; --fav: 20px; --first: 56px; --plus: 42px; --wc: 57px; --fs: 15px;
  height: var(--tabh); background: #cbcbcb; display: flex; align-items: stretch; flex: none; }
.tabbar.sm { --tabw: 97.3px; --tabh: 31px; --fav: 16px; --first: 41px; --plus: 34px; --wc: 42px; --fs: 11.8px; }
.tb-first { width: var(--first); display: flex; align-items: center; justify-content: center; padding-right: 7px; border-right: 1px solid #8e8e8e; margin: 8px 0; flex: none; }
.sm .tb-first { border-right: 0; padding-right: 2px; margin: 4px 0; }
.chrome-ico { width: 24px; height: 24px; color: #222; }
.sm .chrome-ico { width: 19px; height: 19px; }
.tab { width: var(--tabw); flex: none; display: flex; align-items: center; padding: 0 12px 0 7px; gap: 13px; position: relative; font-size: var(--fs); color: #444; }
.sm .tab { padding: 0 9px 0 5px; gap: 9px; }
.tab::after { content: ""; position: absolute; right: 0; top: 8px; bottom: 8px; width: 1px; background: #8e8e8e; }
.sm .tab::after { top: 5px; bottom: 5px; }
.tab.noline::after, .tab.active::after { display: none; }
.tab.active { background: #f7f7f7; border-radius: 9px 9px 0 0; color: #222; }
.fav { width: var(--fav); height: var(--fav); }
.tt { flex: 1; min-width: 0; overflow: hidden; white-space: nowrap; letter-spacing: -.55px;
  -webkit-mask-image: linear-gradient(90deg, #000 84%, transparent); mask-image: linear-gradient(90deg, #000 84%, transparent); }
.tx { width: 16px; height: 16px; color: #222; }
.sm .tx { width: 13px; height: 13px; }
.tb-plus { width: var(--plus); display: flex; align-items: center; justify-content: center; flex: none; }
.wctl { margin-left: auto; display: flex; align-items: center; padding-right: 1px; }
.wc { width: var(--wc); height: 20px; color: #222; }
.sm .wc { height: 15px; }
.wc.dimmed { color: #777; }

/* address row */
.addr { --addrh: 50px; height: var(--addrh); background: #f7f7f7; display: flex; align-items: center; flex: none; padding-left: 1px; }
.addr.sm { --addrh: 37px; }
.nav-btn { width: 46px; height: 100%; display: flex; align-items: center; justify-content: center; flex: none; }
.sm .nav-btn { width: 34px; }
.pill { width: 1516px; margin-left: 8px; height: 39px; border: 1.5px solid #d6d6d6; border-radius: 20px; background: #fff; display: flex; align-items: center; padding-left: 3px; }
.sm .pill { width: 1113px; margin-left: 6px; height: 29px; border-radius: 15px; }
.locktile { width: 30px; height: 31px; border-radius: 15px; background: #efefef; display: flex; align-items: center; justify-content: center; flex: none; }
.sm .locktile { width: 22px; height: 23px; }
.lockico { width: 20px; height: 20px; color: #444; }
.sm .lockico { width: 16px; height: 16px; }
.url { font-size: 18px; color: #1a1a1a; margin-left: 8px; white-space: nowrap; letter-spacing: -.6px; }
.sm .url { font-size: 13.5px; margin-left: 5px; letter-spacing: -.63px; }
.url-dim { color: #5f5f5f; }
.pill-end { margin-left: auto; display: flex; align-items: center; gap: 16px; padding-right: 10px; }
.sm .pill-end { gap: 11px; padding-right: 6px; }
.pill-sep { width: 1px; height: 20px; background: #cfcfcf; }
.dim { color: #777; }
.favs { margin-left: 19px; }
.sm .favs { margin-left: 14px; }
.update { width: 100px; height: 39px; margin-left: 15px; border: 1.5px solid #107c10; border-radius: 20px; color: #107c10; font-size: 15.5px; display: flex; align-items: center; justify-content: space-between; padding: 0 7px 0 9px; letter-spacing: -.5px; flex: none; }
.sm .update { width: 75px; height: 29px; margin-left: 9px; font-size: 12px; border-radius: 15px; padding: 0 3px 0 7px; letter-spacing: -.4px; }
.avatar { position: relative; margin-left: 11px; flex: none; }
.sm .avatar { margin-left: 7px; }
.av { width: 28px; height: 38px; }
.sm .av { width: 22px; height: 29px; }
.red-dot { position: absolute; top: 1px; right: -3px; width: 8px; height: 8px; background: #e81123; border-radius: 50%; }
.sm .red-dot { width: 6px; height: 6px; right: -2px; }
.more { width: 20px; margin-left: 22px; font-size: 18px; font-weight: 700; text-align: center; color: #222; flex: none; }
.sm .more { margin-left: 12px; font-size: 14px; }
.copilot { width: 28px; height: 30px; margin-left: 23px; }
.sm .copilot { width: 22px; height: 23px; margin-left: 13px; }

/* dimmed underlying page */
.stage { flex: 1; min-height: 0; position: relative; padding: 1px 6px 5px 5px; }
.gpt { height: 100%; background: #181818; border-radius: 10px; display: flex; color: #0a0a0a; overflow: hidden; }
.gpt-side { width: 326px; flex: none; background: #171717; display: flex; flex-direction: column; }
.gpt-tools { height: 70px; flex: none; display: flex; align-items: center; justify-content: space-between; padding: 0 30px 0 28px; }
.tools-right { display: flex; gap: 25px; margin-left: auto; }
.g24 { width: 24px; height: 26px; }
.g22 { width: 24px; height: 24px; }
.g20 { width: 20px; height: 20px; }
.g18 { width: 18px; height: 18px; color: #121212; }
.grow { height: 45px; flex: none; display: flex; align-items: center; gap: 16px; font-size: 18px; white-space: nowrap; padding-left: 28px; letter-spacing: -.2px; overflow: hidden; }
.sora { width: 30px; height: 30px; margin-left: -3px; margin-right: -3px; border-radius: 50%; background: radial-gradient(circle at 35% 35%, #0c1020, #05060a 75%); flex: none; }
.ringed { width: 28px; height: 28px; margin: 0 -2px; border: 1px solid #141414; border-radius: 50%; display: flex; align-items: center; justify-content: center; flex: none; }
.more-dim { width: 24px; font-weight: 700; text-align: center; }
.ghead { font-size: 14.5px; font-weight: 600; padding-left: 26px; margin-top: 37px; height: 30px; display: flex; align-items: center; color: #0c0c0c; }
.today { margin-top: 35px; }
.hist { height: 45px; flex: none; padding-left: 26px; margin: 0 6px 0 0; display: flex; align-items: center; font-size: 18px; white-space: nowrap; border-radius: 8px; letter-spacing: -.2px; }
.hist.sel { background: #1c1c1c; margin-top: 5px; }
.team { display: flex; align-items: center; gap: 13px; padding-left: 28px; margin-top: 5px; }
.team-t { font-size: 18px; line-height: 25px; width: 220px; letter-spacing: -.2px; }
.team-s { font-size: 15px; color: #111; line-height: 22px; white-space: nowrap; }
.gpt-main { flex: 1; min-width: 0; display: flex; flex-direction: column; }
.gpt-head { height: 70px; flex: none; display: flex; align-items: center; padding: 0 24px 0 29px; }
.model { font-size: 22px; font-weight: 600; letter-spacing: -.6px; }
.model small { font-size: 14px; vertical-align: 5px; }
.head-right { margin-left: auto; display: flex; align-items: center; gap: 24px; }
.share { width: 144px; height: 47px; border: 1px solid #151515; border-radius: 24px; display: flex; align-items: center; justify-content: center; gap: 10px; font-size: 18px; font-weight: 600; letter-spacing: -.7px; }
.gavatar { width: 40px; height: 40px; border-radius: 50%; background: #090d24; }
.composer { margin: auto 0 0 320px; width: 949px; height: 120px; border: 1px solid #151515; border-radius: 24px; position: relative; flex: none; }
.sendc { position: absolute; right: 14px; bottom: 14px; width: 41px; height: 41px; background: #000; border-radius: 50%; }
.disclaimer { height: 40px; flex: none; display: flex; align-items: center; justify-content: center; font-size: 15.5px; letter-spacing: -.3px; position: relative; white-space: nowrap; padding: 2px 0 0 38px; }
.help { position: absolute; right: 8px; bottom: -3px; width: 40px; height: 40px; border: 1px solid #141414; border-radius: 50%; display: flex; align-items: center; justify-content: center; }
.close-x { position: absolute; left: 1872px; top: 24px; width: 22px; height: 22px; color: #fff; }

/* captured window */
.shot { position: absolute; left: 255px; top: 71px; width: 1410px; height: 793px; background: #f7f7f7; display: flex; flex-direction: column; }
.capture { position: absolute; left: 1362px; top: 7px; width: 41px; height: 41px; background: rgba(255,255,255,.85); border-radius: 50%; display: flex; align-items: center; justify-content: center; }
.cap-i { width: 24px; height: 26px; }

/* replit */
.rp { width: 1402px; margin-left: 4px; height: 685px; flex: none; background: #0e1525; border-radius: 8px 8px 6px 6px; color: #f5f9fc; font-family: "Noto Sans", sans-serif; display: flex; flex-direction: column; overflow: hidden; }
.rp-head { height: 36px; flex: none; display: flex; align-items: center; padding-left: 10px; font-size: 11px; color: #f5f9fc; }
.r14 { width: 14px; height: 14px; color: #c2c8cc; }
.r12 { width: 12px; height: 12px; color: #c2c8cc; }
.r10 { width: 10px; height: 10px; color: #8a94a0; }
.r16 { width: 16px; height: 16px; color: #c2c8cc; }
.rp-proj { width: 12px; height: 16px; background: #000; border-radius: 2px; margin-left: 14px; position: relative; flex: none; }
.rp-proj::after { content: ""; position: absolute; left: 4px; top: 3px; width: 4px; height: 10px; border-radius: 2px; background: #5b4a8a; }
.rp-name { margin-left: 6px; letter-spacing: -.15px; }
.rp-name + .r14 { margin-left: 12px; }
.rp-run { display: flex; align-items: center; margin-left: 489px; }
.rp-stop { display: flex; align-items: center; gap: 3px; background: #3c445c; border-radius: 4px; height: 24px; padding: 0 8px 0 10px; font-size: 10px; }
.rp-stop i { width: 7px; height: 8px; background: #c9ced8; border-radius: 1px; }
.rp-chev { color: #9aa3ad; font-size: 10px; margin: -5px 0 0 4px; }
.rp-right { margin-left: auto; display: flex; align-items: center; padding-right: 9px; }
.rp-right > .r14 { width: 12px; height: 12px; margin-right: 10px; }
.rp-btn { display: flex; align-items: center; gap: 4px; height: 24px; padding: 0 8px 0 7px; background: #1c2333; border-radius: 4px; font-size: 10.5px; margin-right: 4px; letter-spacing: -.1px; }
.redeploy { margin-right: 0; border-radius: 4px 0 0 4px; padding: 0 5px 0 9px; }
.copy { margin: 0 0 0 1px; padding: 0 4px; border-radius: 0 4px 4px 0; }
.rp-right > .bell { margin: 0 0 0 11px; }
.rp-av { position: relative; width: 18px; height: 18px; margin-left: 17px; border-radius: 50%; background: #2b3245; display: flex; align-items: center; justify-content: center; font-size: 7px; color: #9aa3ad; }
.rp-av i { position: absolute; left: -3px; bottom: -2px; width: 7px; height: 7px; background: #b3501c; border-radius: 50%; }
.rp-body { flex: 1; min-height: 0; display: flex; padding-bottom: 6px; }
.rail { width: 35px; flex: none; display: flex; flex-direction: column; align-items: center; gap: 9.6px; padding: 0 2px 2px 0; }
.rail-top { width: 24px; height: 24px; border-radius: 4px; background: #1c2333; display: flex; align-items: center; justify-content: center; margin-bottom: 222px; }
.rail-item { height: 18px; display: flex; align-items: center; position: relative; }
.rail-item::before { content: ""; position: absolute; left: -7px; top: 8px; width: 2px; height: 2px; border-radius: 50%; background: #c2c8cc; }
.rail-sep { width: 18px; height: 1px; background: #2b3245; }
.rail-help { margin-top: auto; font-size: 12px; color: #c2c8cc; }
.violet { color: #8a6cf5; }
.yellow { color: #e8c46a; }
.green { color: #3fa86e; }
.agent { width: 377px; flex: none; background: #1c2333; display: flex; flex-direction: column; border-radius: 4px 4px 0 0; }
.ptabs { height: 23px; flex: none; display: flex; align-items: stretch; border-bottom: 1px solid #2b3245; font-size: 10px; background: #1c2333; }
.ptab { display: flex; align-items: center; gap: 4px; color: #c2c8cc; white-space: nowrap; border-right: 1px solid #2b3245; letter-spacing: -.1px; }
.ptab.cur { color: #f5f9fc; }
.a-tab { width: 71px; padding-left: 4px; }
.a-tab .ptab-x { margin-left: 12px; }
.ptab-x { color: #8a94a0; font-size: 11px; }
.ptab-add { width: 24px; display: flex; align-items: center; justify-content: center; color: #9aa3ad; font-size: 12px; }
.ptab-dots { margin: 5px 6px 0 auto; }
.a-bar { height: 22px; margin-top: -1px; flex: none; display: flex; align-items: center; padding: 0 6px 0 7px; font-size: 9.5px; color: #e4e8ee; letter-spacing: -.2px; }
.a-new { margin-left: 12px; font-weight: 500; }
.a-title { margin-left: 42px; font-weight: 500; letter-spacing: -.32px; }
.a-title small { color: #9aa3ad; margin-left: 2px; }
.a-gauge { margin-left: auto; }
.chat { flex: 1; min-height: 0; overflow: hidden; display: flex; flex-direction: column; justify-content: flex-end; padding: 0 12px 11px 11px; font-size: 10.5px; line-height: 16.5px; color: #f5f9fc; letter-spacing: -.35px; white-space: nowrap; }
.bubble-user { flex: none; width: 293px; margin-left: 37px; background: #10457f; border-radius: 2px 2px 4px 4px; padding: 10px 6px 4px; }
.bubble-user p + p { margin-top: 10.5px; }
.stamp { flex: none; width: 324px; margin-top: 2px; text-align: right; font-size: 9px; color: #8a94a0; line-height: 17px; padding-bottom: 19px; letter-spacing: -.1px; }
.bubble-ai { flex: none; background: #2f2f57; border-radius: 5px; padding: 8.5px 9px 10px; color: #e8eaf2; position: relative; }
.bubble-ai::before { content: ""; position: absolute; left: -1px; top: 47px; width: 1px; height: 33px; background: #5b4fc4; }
.bubble-ai p + p, .bubble-ai ol, .bubble-ai ol + p { margin-top: 11.6px; }
.bubble-ai ol { padding-left: 12px; }
.bubble-ai li + li { margin-top: 2.5px; }
.bubble-ai code { font-family: "Liberation Mono", monospace; font-size: 9.5px; color: #d97b34; margin: 0 4px; line-height: 19px; letter-spacing: 0; }
.a-status { height: 20px; margin: 0 12px; flex: none; background: #2b3245; border-radius: 5px 5px 0 0; font-size: 8.5px; padding: 0 4px; display: flex; align-items: center; color: #c2c8cc; }
.a-input { height: 56px; margin: 0 6px 5px; flex: none; background: #2b3245; border: 1px solid #3c445c; border-radius: 4px; padding: 0 5px 0 7px; display: flex; flex-direction: column; }
.a-ph { font-size: 10px; color: #8a94a0; margin-top: 7px; }
.a-tools { margin-top: auto; margin-bottom: 5px; display: flex; align-items: center; gap: 7px; }
.a-fb { margin-left: auto; font-size: 8.5px; color: #8a94a0; margin-right: 5px; }
.a-send { width: 18px; height: 18px; background: #3c445c; border-radius: 3px; display: flex; align-items: center; justify-content: center; }
.a-send .r12 { color: #8a94a0; }
.preview { width: 980px; margin-left: 4px; flex: none; display: flex; flex-direction: column; background: #1c2333; border-radius: 4px 4px 0 0; overflow: hidden; }
.pv-tab { width: 73px; padding-left: 4px; font-weight: 600; }
.pv-tab .ptab-x { margin-left: 4px; }
.con-tab { width: 76px; padding-left: 6px; }
.dep-tab { width: 97px; padding-left: 6px; }
.pv-url { height: 25px; margin-top: -1px; flex: none; display: flex; align-items: center; gap: 8px; padding: 0 3px 0 6px; background: #1c2333; font-size: 9.5px; }
.faint { color: #5f6b7a; }
.pv-box { width: 757px; height: 18px; background: #2b3245; border: 1px solid #3c445c; border-radius: 3px; display: flex; align-items: center; margin-right: -4px; flex: none; }
.pv-host { background: #1e3a2c; color: #3fbf6b; height: 100%; padding: 0 3px; display: flex; align-items: center; letter-spacing: -.1px; border-right: 1px solid #3c445c; }
.pv-path { margin-left: 7px; letter-spacing: -.18px; color: #e4e8ee; font-size: 9.3px; }
.pv-go { margin-left: auto; margin-right: 2px; }
.pv-mini { height: 18px; border: 1px solid #3c445c; border-radius: 4px; display: flex; align-items: center; gap: 3px; padding: 0 3px; color: #9aa3ad; position: relative; font-size: 8.5px; margin-left: -4px; flex: none; letter-spacing: -.1px; }
.devt { padding-right: 4px; }
.badge { position: absolute; right: -2px; top: -3px; background: #ee4d5a; color: #400; font-size: 7.5px; line-height: 10px; padding: 0 2px; border-radius: 4px; font-weight: 500; letter-spacing: -.3px; }
.pv-frame { flex: 1; min-height: 0; background: #fff; color: #222; display: flex; font-family: "Open Sans", sans-serif; overflow: hidden; }
.page { width: 939px; flex: none; border-right: 1px solid #e5e7eb; padding-left: 2px; }
.page-head { margin-top: -18px; display: flex; justify-content: space-between; align-items: flex-end; padding: 0 16px 0 16px; }
.page-h { font-size: 18px; line-height: 22px; font-weight: 700; color: #111; }
.page-sub { font-size: 10px; line-height: 12px; color: #6b7280; letter-spacing: -.1px; }
.page-btns { display: flex; gap: 6px; margin-bottom: -1px; }
.btn { height: 28px; padding: 0 9px; border: 1px solid #eceef1; border-radius: 4px; background: #fff; font-size: 10px; font-weight: 600; color: #111827; display: flex; align-items: center; gap: 8px; letter-spacing: -.15px; }
.btn .r12 { color: currentColor; }
.btn.dark { background: #111827; color: #fff; border-color: #111827; }
.btn-row { margin-top: 31px; display: flex; justify-content: flex-end; padding-right: 29px; }
.btn.tall { height: 30px; padding: 0 11px; gap: 5px; }
.card { width: 583px; margin: 11px auto 0; border: 1px solid #e8eaee; border-top: 3px solid #fb9e16; border-radius: 6px 6px 0 0; padding: 24px 23px 0 24px; height: 600px; box-shadow: 0 1px 3px rgba(0,0,0,.04); }
.card-head { display: flex; justify-content: space-between; align-items: flex-start; }
.name { font-size: 20px; line-height: 28px; font-weight: 700; color: #fb9e16; letter-spacing: -.35px; }
.meta { font-size: 12.65px; line-height: 18px; color: #4b5563; margin-top: 6px; letter-spacing: -.1px; }
.meta2 { font-size: 9.9px; line-height: 14px; color: #6b7280; margin-top: 1px; letter-spacing: -.05px; }
.bookc { width: 47px; height: 47px; border-radius: 50%; background: #111827; display: flex; align-items: center; justify-content: center; color: #fff; }
.book { width: 24px; height: 24px; }
.prog { margin-top: 18px; height: 139px; background: #fff7ed; border-radius: 7px; padding: 12px; }
.prog-top { height: 24px; display: flex; align-items: center; justify-content: space-between; color: #111827; }
.prog-l { display: flex; align-items: center; gap: 8px; font-size: 14px; font-weight: 600; letter-spacing: -.2px; }
.prog-p { font-size: 17px; font-weight: 600; letter-spacing: -.4px; }
.emo15 { width: 17px; height: 17px; }
.emo11 { width: 12px; height: 14px; display: inline-block; }
.bar { height: 12px; margin-top: 5px; background: #e5e7eb; border-radius: 6px; overflow: hidden; }
.bar-fill { height: 100%; background: #111827; }
.note { margin-top: 12px; height: 62px; background: #fff; border-radius: 4px; padding: 9.5px 10px; font-size: 9.95px; line-height: 14.7px; color: #1f2937; box-shadow: 0 1px 2px rgba(0,0,0,.05); letter-spacing: -.1px; }
.two { margin-top: 22px; display: grid; grid-template-columns: 280px 1fr; }
.sect { height: 24px; display: flex; align-items: center; gap: 7px; }
.sect-t { font-size: 13.8px; line-height: 24px; font-weight: 600; color: #fb9e16; letter-spacing: -.15px; }
.chip { height: 18px; padding: 0 6px; border-radius: 9px; font-size: 10px; display: flex; align-items: center; font-weight: 500; letter-spacing: -.1px; }
.chip.ok { background: #dcfce7; color: #166534; }
.chip.pr { background: #fef3c7; color: #92400e; }
.eval { margin-top: 33px; }
.chart { margin-top: 9px; display: flex; align-items: center; }
.chart-l { width: 268px; display: flex; justify-content: center; flex: none; }
.donut { width: 118px; height: 118px; border-radius: 50%; background: conic-gradient(#4caf50 0 50%, #ffc107 50% 65%, #ff5722 65% 100%); display: flex; align-items: center; justify-content: center; box-shadow: 0 2px 4px rgba(0,0,0,.12); }
.hole { width: 82px; height: 82px; border-radius: 50%; background: #fff; display: flex; align-items: center; justify-content: center; font-size: 9.5px; color: #222; letter-spacing: -.1px; }
.legend { list-style: none; margin-left: 75px; font-size: 9.8px; letter-spacing: -.1px; color: #222; }
.legend li { height: 21px; display: flex; align-items: center; gap: 3px; white-space: nowrap; }
.dot { width: 8px; height: 8px; border-radius: 50%; margin-right: 3px; }
.dot.g { background: #4caf50; }
.dot.y { background: #ffc107; }
.dot.o { background: #ff5722; }
.sbar { flex: 1; position: relative; display: flex; flex-direction: column; align-items: center; padding: 8px 0 7px 27px; }
.sb-up { width: 0; height: 0; border: 4.5px solid transparent; border-bottom: 6px solid #999; border-top: 0; }
.sb-th { width: 7px; height: 93px; margin-top: 46px; background: #8f8f8f; border-radius: 4px; }
.sb-dn { width: 0; height: 0; margin-top: auto; border: 4.5px solid transparent; border-top: 6px solid #999; border-bottom: 0; }

/* taskbar */
.taskbar { --h: 50px; --cell: 61.5px; --start: 61px; --search: 429px; --ico: 24px; --app: 34px; --tray: 30px; height: var(--h); background: #d4d4d4; display: flex; align-items: stretch; flex: none; }
.taskbar.sm { --h: 38px; --cell: 45.4px; --start: 45px; --search: 314px; --ico: 18px; --app: 26px; --tray: 22px; margin-top: 2px; }
.tk-start { width: var(--start); display: flex; align-items: center; justify-content: center; flex: none; }
.tk-win { width: var(--ico); height: var(--ico); color: #000; }
.tk-search { width: var(--search); background: #fff; display: flex; align-items: center; font-size: 20px; color: #222; flex: none; border: 1px solid #ccc; letter-spacing: -.55px; padding-left: 11px; gap: 13px; white-space: nowrap; }
.sm .tk-search { font-size: 15px; padding-left: 8px; gap: 9px; letter-spacing: -.42px; }
.tk-lens { width: var(--ico); height: var(--ico); color: #111; }
.tk-cell { width: var(--cell); display: flex; align-items: center; justify-content: center; flex: none; }
.tk-cell.on { background: #e8e8e8; border-bottom: 3px solid #0078d7; --tile: #e8e8e8; padding-top: 3px; }
.tk-i { width: var(--ico); height: var(--ico); color: #111; }
.tk-a { width: var(--app); height: var(--app); }
.tray { margin-left: auto; display: flex; align-items: center; padding-right: 25px; }
.sm .tray { padding-right: 20px; }
.tr { width: var(--tray); height: 22px; color: #222; }
.sm .tr { height: 16px; }
.lang { width: 40px; text-align: center; font-size: 15px; letter-spacing: -.3px; }
.sm .lang { width: 31px; font-size: 11px; letter-spacing: -.2px; }
.clock { width: 82px; margin-left: 5px; text-align: center; font-size: 15px; line-height: 24px; letter-spacing: -.5px; color: #222; }
.sm .clock { width: 62px; margin-left: 2px; font-size: 11px; line-height: 18px; letter-spacing: -.35px; }
.note-i { margin-left: 12px; width: 30px; height: 26px; }
.sm .note-i { margin-left: 5px; width: 22px; height: 20px; }
```
